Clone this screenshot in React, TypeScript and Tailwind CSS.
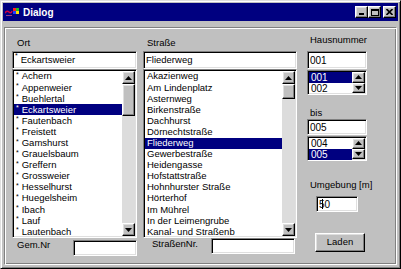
import React from 'react';

// Win95 bevel styles
const sunken =
    'border border-t-[#808080] border-l-[#808080] border-r-white border-b-white shadow-[inset_1px_1px_0_#000,inset_-1px_-1px_0_#dfdfdf]';
const raised =
    'border border-t-white border-l-white border-r-black border-b-black shadow-[inset_-1px_-1px_0_#808080,inset_1px_1px_0_#dfdfdf]';

const ortItems = [
    'Achern',
    'Appenweier',
    'Buehlertal',
    'Eckartsweier',
    'Fautenbach',
    'Freistett',
    'Gamshurst',
    'Grauelsbaum',
    'Greffern',
    'Grossweier',
    'Hesselhurst',
    'Huegelsheim',
    'Ibach',
    'Lauf',
    'Lautenbach',
];

const strassenItems = [
    'Akazienweg',
    'Am Lindenplatz',
    'Asternweg',
    'Birkenstraße',
    'Dachhurst',
    'Dörnechtstraße',
    'Fliederweg',
    'Gewerbestraße',
    'Heidengasse',
    'Hofstattstraße',
    'Hohnhurster Straße',
    'Hörterhof',
    'Im Mührel',
    'In der Leimengrube',
    'Kanal- und Straßenb',
];

function Arrow({ down = false }: { down?: boolean }) {
    return (
        <svg width="7" height="4" viewBox="0 0 7 4">
            <polygon points={down ? '0,0 7,0 3.5,4' : '3.5,0 7,4 0,4'} fill="#000" />
        </svg>
    );
}

function ArrowBtn({ down = false, h = 'h-[13px]' }: { down?: boolean; h?: string }) {
    return (
        <div className={`flex w-[13px] items-center justify-center bg-[#c0c0c0] ${h} ${raised}`}>
            <Arrow down={down} />
        </div>
    );
}

function Star() {
    return <span className="mr-[3px] self-start text-[7px] leading-[8px]">*</span>;
}

function ListBox({
    items,
    selected,
    star = false,
    thumbHeight,
}: {
    items: string[];
    selected: string;
    star?: boolean;
    thumbHeight: string;
}) {
    return (
        <div className={`flex h-[169px] w-full bg-white ${sunken}`}>
            <div className="flex-1 overflow-hidden pt-[1px] pl-[1px]">
                {items.map((item) => (
                    <div
                        key={item}
                        className={`flex h-[11.1px] items-center whitespace-nowrap pl-[2px] ${
                            item === selected ? 'bg-[#000080] text-white' : 'text-black'
                        }`}
                    >
                        {star && <Star />}
                        {item}
                    </div>
                ))}
            </div>
            <div className="my-[1px] mr-[1px] flex w-[13px] flex-col bg-[#dcdcdc]">
                <ArrowBtn />
                <div className={`w-[13px] bg-[#c0c0c0] ${thumbHeight} ${raised}`} />
                <div className="flex-1" />
                <ArrowBtn down />
            </div>
        </div>
    );
}

function SpinList({ items, selected }: { items: string[]; selected: string }) {
    return (
        <div className={`flex h-[25px] w-[60px] bg-white ${sunken}`}>
            <div className="flex-1 pt-[1px] pl-[1px]">
                {items.map((item) => (
                    <div
                        key={item}
                        className={`flex h-[11px] items-center pl-[2px] text-[10px] ${
                            item === selected ? 'bg-[#000080] text-white' : 'text-black'
                        }`}
                    >
                        {item}
                    </div>
                ))}
            </div>
            <div className="my-[1px] mr-[1px] flex flex-col">
                <ArrowBtn h="h-[11.5px]" />
                <ArrowBtn down h="h-[11.5px]" />
            </div>
        </div>
    );
}

function TitleIcon() {
    return (
        <svg width="14" height="10" viewBox="0 0 14 10">
            <path d="M0 6 Q2 3 4 5 T7 4" stroke="#d00040" strokeWidth="1.5" fill="none" />
            <rect x="8" y="1" width="3" height="3" fill="#ff2020" />
            <rect x="11" y="1" width="3" height="3" fill="#20c020" />
            <rect x="8" y="4" width="3" height="3" fill="#2040ff" />
            <rect x="11" y="4" width="3" height="3" fill="#ffe000" />
            <rect x="1" y="8" width="6" height="1" fill="#a04080" />
        </svg>
    );
}

export default function App() {
    return (
        <div className="h-[269px] w-[401px] bg-[#c0c0c0] font-['Liberation_Sans',Arial,sans-serif] text-[9.5px] text-black">
            <div className="flex h-full w-full flex-col border border-t-[#dfdfdf] border-l-[#dfdfdf] border-r-black border-b-black p-[2px] shadow-[inset_1px_1px_0_#fff,inset_-1px_-1px_0_#808080]">
                {/* Titelleiste */}
                <div className="flex h-[18px] items-center bg-[#000080] pl-[2px] pr-[2px]">
                    <TitleIcon />
                    <span className="ml-[4px] text-[10px] font-bold text-white">Dialog</span>
                    <div className="flex-1" />
                    <div className={`flex h-[12px] w-[13px] items-end bg-[#c0c0c0] pb-[2px] pl-[3px] ${raised}`}>
                        <div className="h-[2px] w-[5px] bg-black" />
                    </div>
                    <div className={`flex h-[12px] w-[13px] items-center justify-center bg-[#c0c0c0] ${raised}`}>
                        <div className="h-[7px] w-[8px] border border-t-2 border-black" />
                    </div>
                    <div className={`ml-[2px] flex h-[12px] w-[13px] items-center justify-center bg-[#c0c0c0] ${raised}`}>
                        <svg width="7" height="6" viewBox="0 0 7 6">
                            <path d="M0.5 0 L6.5 6 M6.5 0 L0.5 6" stroke="#000" strokeWidth="1.6" />
                        </svg>
                    </div>
                </div>

                {/* Inhalt */}
                <div className="mx-[1px] mt-[6px] mb-[1px] flex flex-1 items-start border border-t-[#808080] border-l-[#808080] border-r-white border-b-white pl-[7px] shadow-[inset_1px_1px_0_#fff,inset_-1px_-1px_0_#808080]">
                    {/* Ort */}
                    <div className="flex w-[125px] flex-col">
                        <div className="mt-[9px] ml-[5px] h-[11px] leading-[11px]">Ort</div>
                        <div className={`mt-[3px] flex h-[18px] items-center bg-white pl-[2px] ${sunken}`}>
                            <Star />
                            Eckartsweier
                        </div>
                        <ListBox items={ortItems} selected="Eckartsweier" star thumbHeight="h-[32px]" />
                        <div className="mt-[1px] flex items-start">
                            <div className="ml-[5px] h-[11px] leading-[11px]">Gem.Nr</div>
                            <div className="flex-1" />
                            <div className={`mt-[1px] h-[16px] w-[64px] bg-white ${sunken}`} />
                        </div>
                    </div>

                    {/* Straße */}
                    <div className="ml-[6px] flex w-[154px] flex-col">
                        <div className="mt-[9px] ml-[4px] h-[11px] leading-[11px]">Straße</div>
                        <div className={`mt-[3px] flex h-[18px] items-center bg-white pl-[2px] ${sunken}`}>
                            Fliederweg
                        </div>
                        <ListBox items={strassenItems} selected="Fliederweg" thumbHeight="h-[15px]" />
                        <div className="flex items-start">
                            <div className="ml-[9px] h-[11px] leading-[11px]">StraßenNr.</div>
                            <div className="flex-1" />
                            <div className={`mr-[2px] h-[16px] w-[84px] bg-white ${sunken}`} />
                        </div>
                    </div>

                    {/* Hausnummer */}
                    <div className="ml-[10px] flex w-[60px] flex-col">
                        <div className="mt-[6px] ml-[3px] h-[11px] leading-[11px] whitespace-nowrap">
                            Hausnummer
                        </div>
                        <div className={`mt-[6px] flex h-[18px] items-center bg-white pl-[2px] text-[10px] ${sunken}`}>
                            001
                        </div>
                        <div className="mt-[1px]">
                            <SpinList items={['001', '002']} selected="001" />
                        </div>
                        <div className="mt-[12px] ml-[3px] h-[11px] leading-[11px]">bis</div>
                        <div className={`mt-[1px] flex h-[16px] items-center bg-white pl-[2px] text-[10px] ${sunken}`}>
                            005
                        </div>
                        <div className="mt-[1px]">
                            <SpinList items={['004', '005']} selected="005" />
                        </div>
                        <div className="mt-[18px] ml-[3px] h-[11px] leading-[11px] whitespace-nowrap">
                            Umgebung [m]
                        </div>
                        <div className={`relative mt-[6px] ml-[9px] flex h-[16px] w-[42px] items-center bg-white pl-[2px] text-[10px] ${sunken}`}>
                            50
                            <div className="absolute top-[2px] left-[5px] h-[10px] w-px bg-black" />
                        </div>
                        <div
                            className={`mt-[21px] ml-[8px] flex h-[19px] w-[50px] items-center justify-center bg-[#c0c0c0] ${raised}`}
                        >
                            Laden
                        </div>
                    </div>
                </div>
            </div>
        </div>
    );
}
